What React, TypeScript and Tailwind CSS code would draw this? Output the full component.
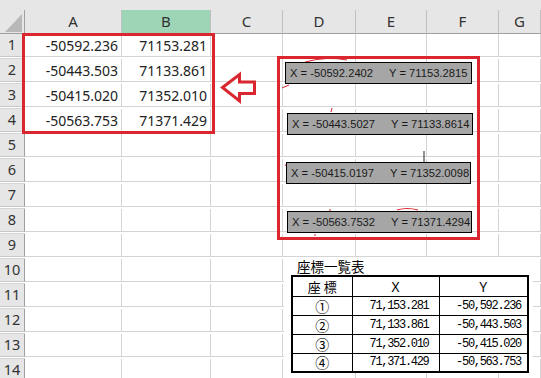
import React from 'react'

const GRID = 'grid grid-cols-[25px_97px_89px_72px_73px_71px_72px_42px]'
const RED = 'border-[#d9262f]'

const cols = ['A', 'B', 'C', 'D', 'E', 'F', 'G', '']

const values: Array<[string, string]> = [
  ['-50592.236', '71153.281'],
  ['-50443.503', '71133.861'],
  ['-50415.020', '71352.010'],
  ['-50563.753', '71371.429'],
]

const labels = [
  { x: '-50592.2402', y: '71153.2815', cls: 'left-[285px] top-[62px] w-[187px]' },
  { x: '-50443.5027', y: '71133.8614', cls: 'left-[287px] top-[113px] w-[186px]' },
  { x: '-50415.0197', y: '71352.0098', cls: 'left-[286px] top-[162px] w-[185px]' },
  { x: '-50563.7532', y: '71371.4294', cls: 'left-[287px] top-[211px] w-[185px]' },
]

const coords = [
  { no: '①', x: '71,153.281', y: '-50,592.236' },
  { no: '②', x: '71,133.861', y: '-50,443.503' },
  { no: '③', x: '71,352.010', y: '-50,415.020' },
  { no: '④', x: '71,371.429', y: '-50,563.753' },
]

function Row({ n }: { n: number }) {
  const v = values[n - 1]
  return (
    <div className={`${GRID} h-[25px]`}>
      <div className="flex items-center justify-center bg-[#e6e6e6] border-r border-r-[#9f9f9f] border-b border-b-[#c8c8c8] text-[14.5px] text-[#333]">
        {n}
      </div>
      {cols.slice(0, 7).map((c, i) => (
        <div
          key={c}
          className="flex items-center justify-end pr-[3px] border-r border-b border-[#d4d4d4] text-[14px] text-[#222]"
        >
          {v && i < 2 ? v[i] : ''}
        </div>
      ))}
      <div className="border-b border-[#d4d4d4]" />
    </div>
  )
}

export default function App() {
  return (
    <div className="relative w-[541px] h-[378px] overflow-hidden bg-white font-['Noto_Sans','Noto_Sans_CJK_JP',sans-serif]">
      {/* ヘッダー */}
      <div className="h-[10px] bg-[#e6e6e6]" />
      <div className={`${GRID} h-[24px] bg-[#e6e6e6]`}>
        <div className="relative border-r border-b border-[#9f9f9f]">
          <svg className="absolute left-[5px] top-[4px]" width="17" height="18" viewBox="0 0 17 18">
            <polygon points="17,0 17,18 0,18" fill="#b8b8b8" />
          </svg>
        </div>
        {cols.map((c) => (
          <div
            key={c || 'end'}
            className={`flex items-center justify-center text-[15px] text-[#333] border-b border-[#9f9f9f] ${
              c ? 'border-r border-r-[#c0c0c0]' : ''
            } ${c === 'B' ? 'bg-[#9fd5b7]' : ''}`}
          >
            {c}
          </div>
        ))}
      </div>

      {/* セル */}
      {Array.from({ length: 14 }, (_, i) => (
        <Row key={i} n={i + 1} />
      ))}

      {/* 赤枠 */}
      <div className={`absolute left-[22px] top-[33px] w-[193px] h-[101px] border-[3px] ${RED}`} />
      <div className={`absolute left-[277px] top-[56px] w-[203px] h-[184px] border-[3px] ${RED}`} />

      {/* 矢印 */}
      <svg className="absolute left-[219px] top-[70px]" width="40" height="36" viewBox="0 0 40 36">
        <polygon
          points="3.5,17.5 20.5,4.5 20.5,12 35.5,12 35.5,23.5 20.5,23.5 20.5,31"
          fill="white"
          stroke="#d9262f"
          strokeWidth="3"
          strokeLinejoin="miter"
        />
      </svg>

      {/* 引出線の名残 */}
      <svg className="absolute left-[277px] top-[50px]" width="210" height="195" viewBox="0 0 210 195">
        <path d="M28 12 Q50 6 70 10" stroke="#d9262f" strokeWidth="1" fill="none" />
        <path d="M5 38 L12 35" stroke="#d9262f" strokeWidth="1" fill="none" />
        <path d="M55 58 L54 62" stroke="#d9262f" strokeWidth="1" fill="none" />
        <path d="M8 116 L11 112" stroke="#d9262f" strokeWidth="1" fill="none" />
        <path d="M147 101 L147 112" stroke="#222" strokeWidth="1" fill="none" />
        <path d="M120 160 Q130 157 141 160" stroke="#d9262f" strokeWidth="1.2" fill="none" />
        <path d="M53 159 L53 161" stroke="#d9262f" strokeWidth="1" fill="none" />
        <path d="M38 184 L38 186" stroke="#d9262f" strokeWidth="1" fill="none" />
      </svg>

      {/* ラベル */}
      {labels.map((l) => (
        <div
          key={l.x}
          className={`absolute ${l.cls} h-[22px] bg-[#a6a6a6] border border-black flex items-center gap-[16px] pl-[4px] overflow-hidden whitespace-nowrap font-['Liberation_Sans',sans-serif] text-[11.2px] text-[#1a1a1a]`}
        >
          <span className="shrink-0">X = {l.x}</span>
          <span className="shrink-0">Y = {l.y}</span>
        </div>
      ))}

      {/* 座標一覧表 */}
      <div className="absolute left-[284px] top-[257px] w-[249px] h-[116px] bg-white">
        <div className="h-[18px] pl-[13px] pt-[1px] leading-[16px] text-[13.5px] text-black font-['Noto_Sans_CJK_JP',sans-serif]">
          座標一覧表
        </div>
        <table className="ml-[7px] border-collapse border-2 border-black text-black">
          <thead>
            <tr className="h-[20px]">
              <th className="w-[60px] p-0 border border-black font-normal text-[13px] leading-none font-['Noto_Sans_CJK_JP',sans-serif]">
                座 標
              </th>
              <th className="w-[87px] p-0 border border-black font-normal text-[13px] leading-none font-['Noto_Sans_CJK_JP',sans-serif]">
                Ｘ
              </th>
              <th className="w-[89px] p-0 border border-black font-normal text-[13px] leading-none font-['Noto_Sans_CJK_JP',sans-serif]">
                Ｙ
              </th>
            </tr>
          </thead>
          <tbody>
            {coords.map((c) => (
              <tr key={c.no} className="h-[19px]">
                <td className="p-0 border border-black text-center text-[14px] leading-none font-['Noto_Sans_CJK_JP',sans-serif]">
                  {c.no}
                </td>
                <td className="p-0 pr-[10px] border border-black text-right text-[12px] leading-none tracking-[-1.3px] font-['Liberation_Mono',monospace]">
                  {c.x}
                </td>
                <td className="p-0 pr-[6px] border border-black text-right text-[12px] leading-none tracking-[-1.3px] font-['Liberation_Mono',monospace]">
                  {c.y}
                </td>
              </tr>
            ))}
          </tbody>
        </table>
      </div>
    </div>
  )
}
